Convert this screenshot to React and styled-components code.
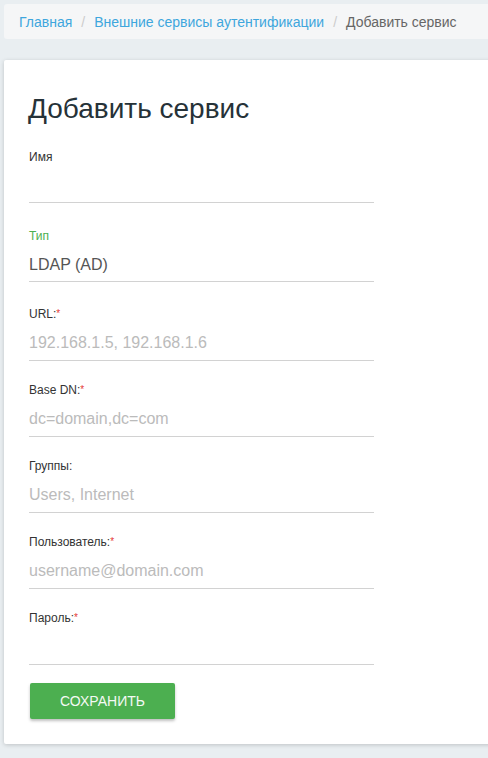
import React from 'react';
import styled, {createGlobalStyle} from "styled-components";

const GlobalStyle = createGlobalStyle`
  body {
    margin: 0;
    background: #e9eef1;
    font-family: "Liberation Sans", Arial, sans-serif;
  }
`

const Page = styled.div`
  padding: 4px 0 20px 4px;
  overflow: hidden;
  min-height: 758px;
  box-sizing: border-box;
`

const Breadcrumb = styled.ol`
  display: flex;
  align-items: center;
  list-style: none;
  margin: 0 0 21px 0;
  padding: 0 15px;
  height: 35px;
  width: 520px;
  box-sizing: border-box;
  background: #f5f6f7;
  border-radius: 3px;
  font-size: 14px;

  li + li::before {
    content: "/";
    color: #ccc;
    padding: 0 9px;
  }
`

const Crumb = styled.li`
  color: ${props => props.active ? '#666' : '#3ea6dd'};
`

const Card = styled.div`
  width: 520px;
  background: #fff;
  box-shadow: 0 1px 4px rgba(0, 0, 0, .18);
  border-radius: 2px;
  padding: 29px 25px 25px 25px;
  box-sizing: border-box;
`

const Title = styled.h1`
  margin: 0 0 20px -1px;
  font-size: 28px;
  font-weight: 400;
  line-height: 40px;
  color: #263238;
`

const Form = styled.form`
  width: 345px;
  display: flex;
  flex-direction: column;
`

const Field = styled.div`
  display: flex;
  flex-direction: column;
  margin-bottom: ${props => props.gap || 21}px;
`

const Label = styled.label`
  font-size: 12px;
  line-height: 16px;
  color: ${props => props.focused ? '#4caf50' : '#333'};
`

const Required = styled.span`
  color: #e53935;
  font-size: 10px;
  vertical-align: top;
`

const Input = styled.div`
  margin-top: 4px;
  height: ${props => props.h || 34}px;
  line-height: ${props => props.h || 34}px;
  font-size: 16px;
  color: ${props => props.placeholder ? '#bbb' : '#555'};
  border-bottom: 1px solid #d2d2d2;
`

const Button = styled.button`
  align-self: flex-start;
  margin: 0 0 0 1px;
  width: 145px;
  height: 36px;
  border: none;
  border-radius: 2px;
  background: #4caf50;
  color: #f4f9f4;
  font-family: "Liberation Sans", Arial, sans-serif;
  font-size: 14px;
  text-transform: uppercase;
  box-shadow: 0 2px 3px rgba(0, 0, 0, .25);
`

const fields = [
    {label: 'Имя', gap: 25, h: 33},
    {label: 'Тип', value: 'LDAP (AD)', focused: true, gap: 24, h: 33},
    {label: 'URL:', required: true, placeholder: '192.168.1.5, 192.168.1.6'},
    {label: 'Base DN:', required: true, placeholder: 'dc=domain,dc=com'},
    {label: 'Группы:', placeholder: 'Users, Internet'},
    {label: 'Пользователь:', required: true, placeholder: 'username@domain.com'},
    {label: 'Пароль:', required: true, gap: 18},
]

const App = () => {
    return (
        <Page>
            <GlobalStyle/>
            <Breadcrumb>
                <Crumb>Главная</Crumb>
                <Crumb>Внешние сервисы аутентификации</Crumb>
                <Crumb active>Добавить сервис</Crumb>
            </Breadcrumb>
            <Card>
                <Title>Добавить сервис</Title>
                <Form>
                    {fields.map(f => (
                        <Field key={f.label} gap={f.gap}>
                            <Label focused={f.focused}>
                                {f.label}{f.required && <Required>*</Required>}
                            </Label>
                            <Input h={f.h} placeholder={!f.value && f.placeholder ? 1 : undefined}>
                                {f.value || f.placeholder || '\u00a0'}
                            </Input>
                        </Field>
                    ))}
                    <Button type="button">Сохранить</Button>
                </Form>
            </Card>
        </Page>
    )
}

export default App
